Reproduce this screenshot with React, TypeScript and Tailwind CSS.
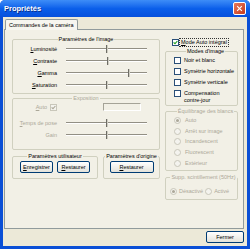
import React from "react";

const DIS = "text-[#ACA899]";

function Check({ checked = false, disabled = false }: { checked?: boolean; disabled?: boolean }) {
  return (
    <span
      className={`relative inline-block w-[7px] h-[7px] border shrink-0 ${
        disabled ? "border-[#C9C7BA] bg-[#F4F3EE]" : "border-[#2A4F78] bg-white"
      }`}
    >
      {checked && (
        <svg viewBox="0 0 5 5" className="absolute left-0 top-0 w-[5px] h-[5px]">
          <path
            d="M0.6 2.3 L2 3.7 L4.4 1"
            stroke={disabled ? "#ACA899" : "#21A121"}
            strokeWidth="1.1"
            fill="none"
          />
        </svg>
      )}
    </span>
  );
}

function Radio({ checked = false, disabled = false }: { checked?: boolean; disabled?: boolean }) {
  return (
    <span
      className={`relative inline-flex items-center justify-center w-[7px] h-[7px] rounded-full border shrink-0 ${
        disabled ? "border-[#C9C7BA] bg-[#F4F3EE]" : "border-[#1C5180] bg-white"
      }`}
    >
      {checked && (
        <span className={`block w-[3px] h-[3px] rounded-full ${disabled ? "bg-[#ACA899]" : "bg-[#21A121]"}`} />
      )}
    </span>
  );
}

function Btn({ children, className = "" }: { children: React.ReactNode; className?: string }) {
  return (
    <div
      className={`flex items-center justify-center h-[12px] border border-[#003C74] rounded-[2px] bg-gradient-to-b from-white to-[#E3E2DA] whitespace-nowrap ${className}`}
    >
      {children}
    </div>
  );
}

function Group({
  legend,
  disabled = false,
  className = "",
  children,
}: {
  legend: string;
  disabled?: boolean;
  className?: string;
  children?: React.ReactNode;
}) {
  return (
    <fieldset className={`border border-[#D0D0BF] rounded-[2px] min-w-0 ${className}`}>
      <legend className={`mx-auto px-[1px] leading-[7px] whitespace-nowrap ${disabled ? DIS : "text-black"}`}>
        {legend}
      </legend>
      {children}
    </fieldset>
  );
}

function Slider({ pos }: { pos: number }) {
  return (
    <div className="relative w-[81px] h-[8px]">
      <div className="absolute left-0 right-0 top-[3px] h-[2px] border-t border-[#928F84] bg-white" />
      <div className="absolute top-0 h-[8px] w-[2px] border-l border-[#6E6D66] bg-[#CFCDC2]" style={{ left: pos }} />
    </div>
  );
}

function U({ children }: { children: React.ReactNode }) {
  return <span className="underline underline-offset-[1px]">{children}</span>;
}

function SliderRow({ label, pos, disabled = false }: { label: React.ReactNode; pos: number; disabled?: boolean }) {
  return (
    <div className="flex items-center h-[12px]">
      <span className={`w-[44px] text-right whitespace-nowrap ${disabled ? DIS : ""}`}>{label}</span>
      <div className="ml-[9px]">
        <Slider pos={pos} />
      </div>
    </div>
  );
}

function CheckRow({ children, checked = false }: { children: React.ReactNode; checked?: boolean }) {
  return (
    <div className="flex items-center h-[11px] gap-[3px]">
      <Check checked={checked} />
      <span className="whitespace-nowrap">{children}</span>
    </div>
  );
}

function RadioRow({ children, checked = false }: { children: React.ReactNode; checked?: boolean }) {
  return (
    <div className="flex items-center h-[10.8px] gap-[4px]">
      <Radio checked={checked} disabled />
      <span className={`whitespace-nowrap ${DIS}`}>{children}</span>
    </div>
  );
}

export default function App() {
  return (
    <div
      className="w-[250px] h-[249px] flex flex-col bg-[#0A4FD6] rounded-t-[5px] overflow-hidden text-[5.5px] leading-[7px] text-black"
      style={{ fontFamily: '"Liberation Sans", Arial, sans-serif' }}
    >
      {/* Title bar */}
      <div className="h-[17px] shrink-0 flex items-center justify-between bg-gradient-to-b from-[#3D8DF7] via-[#0B5FEA] to-[#0650DC]">
        <span className="ml-[4px] text-white font-bold text-[7.5px] [text-shadow:1px_1px_0_#0A2E8A]">Propriétés</span>
        <div className="mr-[4px] w-[13px] h-[13px] rounded-[2px] border border-white bg-gradient-to-br from-[#E8785A] to-[#C4391A] flex items-center justify-center">
          <svg viewBox="0 0 9 9" className="w-[7px] h-[7px]">
            <path d="M1.5 1.5 L7.5 7.5 M7.5 1.5 L1.5 7.5" stroke="white" strokeWidth="1.5" />
          </svg>
        </div>
      </div>

      {/* Client area */}
      <div className="flex-1 mx-[3px] mb-[3px] bg-[#ECE9D8] flex flex-col">
        {/* Tab strip */}
        <div className="pt-[2px] pl-[2px] flex">
          <div className="relative z-10 h-[11px] -mb-px px-[3px] flex items-center border border-b-0 border-[#919B9C] rounded-t-[2px] bg-[#F7F6F0]">
            <span className="whitespace-nowrap">Commandes de la caméra</span>
          </div>
        </div>

        {/* Panel */}
        <div className="ml-[1px] w-[240px] h-[200px] border border-[#919B9C] bg-[#F2F0E6] flex gap-[5px] pl-[7px]">
          {/* Left column */}
          <div className="w-[148px] flex flex-col pt-[6px]">
            <Group legend="Paramètres de l'image" className="pb-[2px]">
              <SliderRow label={<><U>L</U>uminosité</>} pos={40} />
              <SliderRow label={<><U>C</U>ontraste</>} pos={41} />
              <SliderRow label={<><U>G</U>amma</>} pos={62} />
              <SliderRow label={<><U>S</U>aturation</>} pos={40} />
            </Group>

            <Group legend="Exposition" disabled className="mt-[1px] pb-[8px]">
              <div className="flex items-center h-[10px]">
                <div className="w-[44px] flex items-center justify-end gap-[3px]">
                  <span className={DIS}>
                    <U>A</U>uto
                  </span>
                  <Check checked disabled />
                </div>
                <div className="ml-[46px] w-[38px] h-[8px] border border-t-[#A5A397] border-l-[#A5A397] border-b-white border-r-white bg-[#F2F0E6]" />
              </div>
              <div className="mt-[5px]">
                <SliderRow label={<><U>T</U>emps de pose</>} pos={40} disabled />
                <SliderRow label="Gain" pos={40} disabled />
              </div>
            </Group>

            <div className="flex gap-[5px] mt-[3px]">
              <Group legend="Paramètres utilisateur" className="w-[86px] pb-[5px]">
                <div className="flex justify-center gap-[4px] mt-[1px]">
                  <Btn className="w-[33px]">
                    <U>E</U>nregistrer
                  </Btn>
                  <Btn className="w-[33px]">
                    <U>R</U>estaurer
                  </Btn>
                </div>
              </Group>
              <Group legend="Paramètres d'origine" className="w-[57px] pb-[5px]">
                <div className="flex justify-center mt-[1px]">
                  <Btn className="w-[44px]">
                    <U>R</U>estaurer
                  </Btn>
                </div>
              </Group>
            </div>
          </div>

          {/* Right column */}
          <div className="w-[73px] flex flex-col pt-[7px]">
            <div className="flex items-center h-[10px] pl-[7px] gap-[1px]">
              <Check checked />
              <span className="whitespace-nowrap px-[1px] outline outline-1 outline-dotted outline-[#333]">
                <U>M</U>ode Auto intégral
              </span>
            </div>

            <Group legend="Modes d'image" className="mt-[1px] pl-[8px] pb-[2px]">
              <CheckRow>Noir et blanc</CheckRow>
              <CheckRow>Symétrie horizontale</CheckRow>
              <CheckRow>Symétrie verticale</CheckRow>
              <div className="flex items-start gap-[3px] pt-[2px]">
                <Check />
                <span className="leading-[6.5px]">
                  Compensation
                  <br />
                  contre-jour
                </span>
              </div>
            </Group>

            <Group legend="Équilibrage des blancs" disabled className="mt-[2px] pl-[8px] pb-[1px]">
              <RadioRow checked>Auto</RadioRow>
              <RadioRow>Arrêt sur image</RadioRow>
              <RadioRow>Incandescent</RadioRow>
              <RadioRow>Fluorescent</RadioRow>
              <RadioRow>Extérieur</RadioRow>
            </Group>

            <Group legend="Supp. scintillement (50Hz)" disabled className="mt-[3px] pl-[4px] pb-[2px]">
              <div className="flex items-center h-[10px] mt-[6px] gap-[2px]">
                <Radio checked disabled />
                <span className={DIS}>Désactivé</span>
                <Radio disabled />
                <span className={DIS}>Activé</span>
              </div>
            </Group>
          </div>
        </div>

        {/* Bottom buttons */}
        <div className="flex justify-end mt-[2px] mr-[3px]">
          <Btn className="w-[38px]">Fermer</Btn>
        </div>
      </div>
    </div>
  );
}
